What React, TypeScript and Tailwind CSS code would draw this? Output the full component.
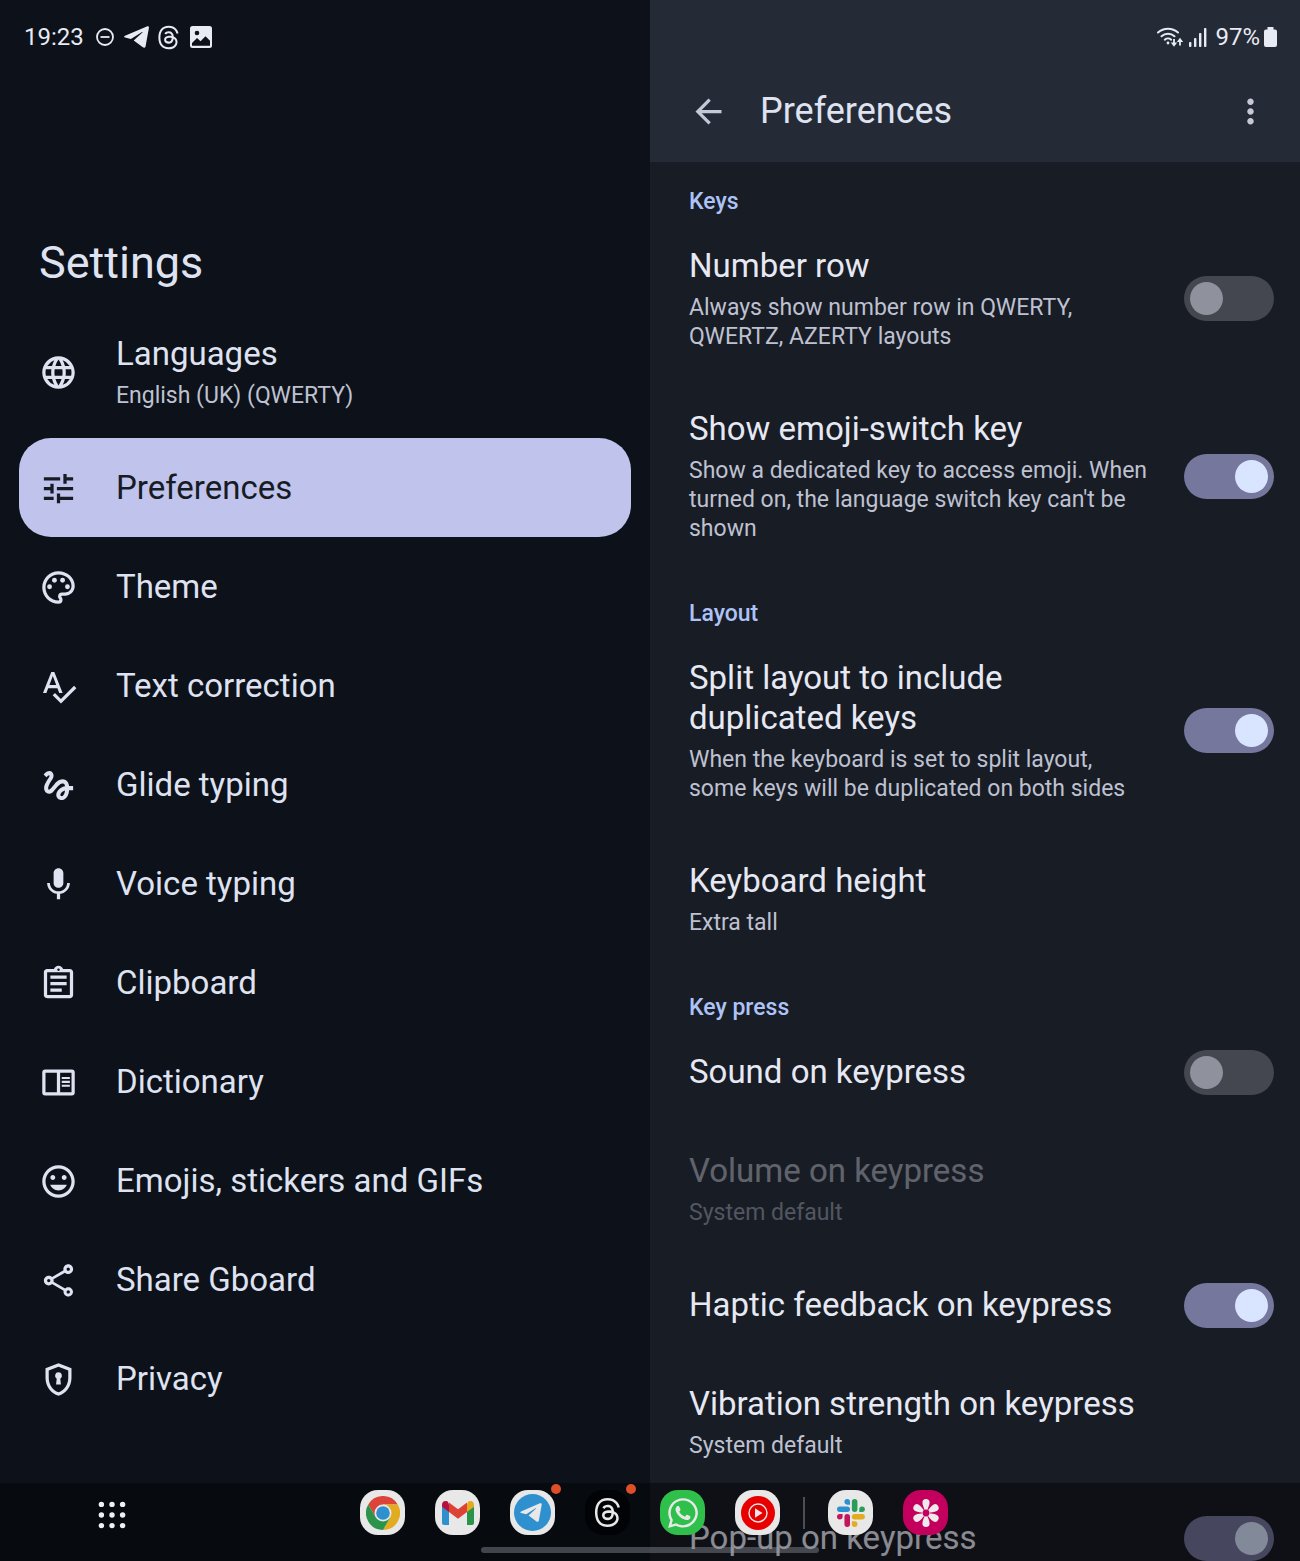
import { useState } from 'react';
import type { ReactNode } from 'react';
import type { IconType } from 'react-icons';
import {
  MdArrowBack,
  MdGesture,
  MdInsertEmoticon,
  MdLanguage,
  MdMic,
  MdMoreVert,
  MdOutlineAssignment,
  MdOutlineColorLens,
  MdOutlineShare,
  MdSpellcheck,
  MdTune,
} from 'react-icons/md';
import { FaWhatsapp } from 'react-icons/fa';
import { FaThreads } from 'react-icons/fa6';

interface IconProps {
  className?: string;
}

function PrivacyIcon({ className }: IconProps) {
  return (
    <svg viewBox="0 0 24 24" fill="currentColor" className={className} aria-hidden="true">
      <path d="M12 2 4 5v6.09c0 5.05 3.41 9.76 8 10.91 4.59-1.15 8-5.86 8-10.91V5l-8-3zm6 9.09c0 4-2.55 7.7-6 8.83-3.45-1.13-6-4.82-6-8.83v-4.7l6-2.25 6 2.25v4.7z" />
      <path d="M12 7.6a2.1 2.1 0 0 0-1.1 3.9L10.5 15h3l-.4-3.5A2.1 2.1 0 0 0 12 7.6z" />
    </svg>
  );
}

function DictionaryIcon({ className }: IconProps) {
  return (
    <svg viewBox="0 0 24 24" fill="none" stroke="currentColor" className={className} aria-hidden="true">
      <rect x="3" y="5" width="18" height="14" rx="0.8" strokeWidth="2" />
      <path d="M12 5v14" strokeWidth="2" />
      <path d="M14 9.2h5M14 11.6h5M14 14h5" strokeWidth="1.3" />
    </svg>
  );
}

function TelegramPlane({ className }: IconProps) {
  return (
    <svg viewBox="0 0 25 22" fill="currentColor" className={className} aria-hidden="true">
      <path d="M1 9.8 22.8.4C24.3-.2 25.2.5 24.9 2.1L21.6 20.2c-.3 1.5-1.5 1.9-2.7 1.1L9.7 14.6l8.7-8.1c.4-.4-.1-.7-.7-.3L6.9 12.9 1.1 11.5C-.2 11.1-.2 10.4 1 9.8z" />
    </svg>
  );
}

interface NavItem {
  label: string;
  summary?: string;
  icon: IconType | typeof PrivacyIcon;
}

const NAV_ITEMS: NavItem[] = [
  { label: 'Languages', summary: 'English (UK) (QWERTY)', icon: MdLanguage },
  { label: 'Preferences', icon: MdTune },
  { label: 'Theme', icon: MdOutlineColorLens },
  { label: 'Text correction', icon: MdSpellcheck },
  { label: 'Glide typing', icon: MdGesture },
  { label: 'Voice typing', icon: MdMic },
  { label: 'Clipboard', icon: MdOutlineAssignment },
  { label: 'Dictionary', icon: DictionaryIcon },
  { label: 'Emojis, stickers and GIFs', icon: MdInsertEmoticon },
  { label: 'Share Gboard', icon: MdOutlineShare },
  { label: 'Privacy', icon: PrivacyIcon },
];

function NavRow({ item, selected, onSelect }: { item: NavItem; selected: boolean; onSelect: () => void }) {
  const Icon = item.icon;
  return (
    <button
      type="button"
      onClick={onSelect}
      aria-current={selected ? 'page' : undefined}
      className={`flex w-full items-center gap-[38px] rounded-[32px] px-5 pt-[30px] text-left ${
        item.summary ? 'pb-7' : 'pb-[29px]'
      } ${selected ? 'bg-[#c0c3eb] text-[#171b23]' : 'text-[#dfe2f0]'}`}
    >
      <Icon className="size-[39px] shrink-0" />
      <span className="flex min-w-0 flex-col gap-[7px]">
        <span className="text-[33px] leading-10">{item.label}</span>
        {item.summary && <span className="text-[23px] leading-[29px] text-[#bec1d1]">{item.summary}</span>}
      </span>
    </button>
  );
}

function SectionTitle({ children, first = false }: { children: ReactNode; first?: boolean }) {
  return (
    <h2 className={`px-[39px] text-[23px] leading-7 font-medium text-[#adc3f7] ${first ? 'pt-[26px]' : 'pt-[29px]'}`}>
      {children}
    </h2>
  );
}

function PrefText({ title, summary }: { title: string; summary?: string }) {
  return (
    <span className="flex min-w-0 flex-1 flex-col gap-[7px]">
      <span className="text-[33px] leading-10 text-[#e6e8f3]">{title}</span>
      {summary && (
        <span className="text-[23px] leading-[29px] whitespace-pre-line text-[#bec1d1]">{summary}</span>
      )}
    </span>
  );
}

function SwitchRow({ title, summary, defaultOn = false }: { title: string; summary?: string; defaultOn?: boolean }) {
  const [on, setOn] = useState(defaultOn);
  return (
    <label
      className={`flex cursor-pointer items-center gap-[26px] pt-[30px] pr-[26px] pl-[39px] ${
        summary ? 'pb-7' : 'pb-[29px]'
      }`}
    >
      <PrefText title={title} summary={summary} />
      <input
        type="checkbox"
        role="switch"
        checked={on}
        onChange={(e) => setOn(e.target.checked)}
        className="-my-1 h-[45px] w-[90px] shrink-0 appearance-none rounded-full bg-[#44474f] p-[6px] before:block before:size-[33px] before:rounded-full before:bg-[#8f919d] checked:bg-[#75779d] checked:before:ml-[45px] checked:before:bg-[#d9e4ff]"
      />
    </label>
  );
}

function LinkRow({ title, summary, disabled = false }: { title: string; summary: string; disabled?: boolean }) {
  return (
    <button
      type="button"
      disabled={disabled}
      className="flex w-full pt-[30px] pr-[26px] pb-7 pl-[39px] text-left disabled:opacity-35"
    >
      <PrefText title={title} summary={summary} />
    </button>
  );
}

function WifiIcon() {
  return (
    <svg viewBox="0 0 26 22" className="h-[22px] w-[26px]" fill="none" stroke="currentColor" aria-hidden="true">
      <path d="M1 6.5a15 15 0 0 1 20 0" strokeWidth="2" strokeLinecap="round" />
      <path d="M4.5 10.3a9.6 9.6 0 0 1 13 0" strokeWidth="2" strokeLinecap="round" />
      <path d="M7.8 13.7a4.8 4.8 0 0 1 6.4 0" strokeWidth="2" strokeLinecap="round" />
      <circle cx="11" cy="17" r="1.4" fill="currentColor" stroke="none" />
      <path d="M17 13v5M23 19.5v-5" strokeWidth="1.8" />
      <path d="M13.8 16.5h6.4L17 20.8zM19.8 16h6.4L23 11.7z" fill="currentColor" stroke="none" />
    </svg>
  );
}

function SignalIcon() {
  return (
    <svg viewBox="0 0 18 19" className="h-[19px] w-[18px]" fill="currentColor" aria-hidden="true">
      <rect x="0" y="14" width="2.4" height="5" rx="0.8" />
      <rect x="5" y="10" width="2.4" height="9" rx="0.8" />
      <rect x="10" y="5" width="2.4" height="14" rx="0.8" />
      <rect x="15" y="0" width="2.4" height="19" rx="0.8" />
    </svg>
  );
}

function ChromeLogo() {
  return (
    <svg viewBox="0 0 48 48" className="size-[34px]" aria-hidden="true">
      <path d="M24 12h20.8A24 24 0 0 0 3.2 12l10.4 18z" fill="#db4437" />
      <path d="M34.4 30 24 48A24 24 0 0 0 44.8 12H24z" fill="#e3ab1f" />
      <path d="M13.6 30 3.2 12A24 24 0 0 0 24 48l10.4-18z" fill="#2a944a" />
      <circle cx="24" cy="24" r="12" fill="#e8e8e8" />
      <circle cx="24" cy="24" r="9.6" fill="#2f90d0" />
    </svg>
  );
}

function GmailLogo() {
  return (
    <svg viewBox="0 0 32 24" className="h-6 w-8" aria-hidden="true">
      <path d="M0 5v17a2 2 0 0 0 2 2h5V10z" fill="#2f90d0" />
      <path d="M25 10v14h5a2 2 0 0 0 2-2V5z" fill="#2a944a" />
      <path d="M25 3.5V11l7-5.2V3.6C32 .5 28.5-1.1 26 .8z" fill="#e3ab1f" />
      <path d="M7 3.5V11L0 5.8V3.6C0 .5 3.5-1.1 6 .8z" fill="#b5103f" />
      <path d="M7 11V1.5l9 6.7 9-6.7V11l-9 6.8z" fill="#dc4335" />
    </svg>
  );
}

function YouTubeMusicLogo() {
  return (
    <svg viewBox="0 0 34 34" className="size-[34px]" aria-hidden="true">
      <circle cx="17" cy="17" r="17" fill="#e80000" />
      <circle cx="17" cy="17" r="9" fill="none" stroke="#e8e8e8" strokeWidth="1.4" />
      <path d="M14 12.3v9.4l7.5-4.7z" fill="#e8e8e8" />
    </svg>
  );
}

function SlackLogo() {
  return (
    <svg viewBox="0 0 54 54" className="size-7" aria-hidden="true">
      <path
        d="M19.7.1a5.38 5.38 0 0 0-5.37 5.39 5.38 5.38 0 0 0 5.37 5.38h5.38V5.49A5.38 5.38 0 0 0 19.7.1m0 14.37H5.38A5.38 5.38 0 0 0 0 19.85a5.38 5.38 0 0 0 5.38 5.39H19.7a5.38 5.38 0 0 0 5.38-5.39 5.38 5.38 0 0 0-5.38-5.38"
        fill="#2f90d0"
      />
      <path
        d="M53.76 19.85a5.38 5.38 0 0 0-5.38-5.38A5.38 5.38 0 0 0 43 19.85v5.39h5.38a5.38 5.38 0 0 0 5.38-5.39m-14.34 0V5.49A5.38 5.38 0 0 0 34.05.1a5.38 5.38 0 0 0-5.38 5.39v14.36a5.38 5.38 0 0 0 5.38 5.39 5.38 5.38 0 0 0 5.37-5.39"
        fill="#2a9d58"
      />
      <path
        d="M34.05 53.9a5.38 5.38 0 0 0 5.37-5.38 5.38 5.38 0 0 0-5.37-5.38h-5.38v5.38a5.38 5.38 0 0 0 5.38 5.38m0-14.36h14.33a5.38 5.38 0 0 0 5.38-5.39 5.38 5.38 0 0 0-5.38-5.38H34.05a5.38 5.38 0 0 0-5.38 5.38 5.38 5.38 0 0 0 5.38 5.39"
        fill="#e3ab1f"
      />
      <path
        d="M0 34.15a5.38 5.38 0 0 0 5.38 5.39 5.38 5.38 0 0 0 5.37-5.39v-5.38H5.38A5.38 5.38 0 0 0 0 34.15m14.33 0v14.37a5.38 5.38 0 0 0 5.37 5.38 5.38 5.38 0 0 0 5.38-5.38V34.15a5.38 5.38 0 0 0-5.38-5.38 5.38 5.38 0 0 0-5.37 5.38"
        fill="#c2185b"
      />
    </svg>
  );
}

function GalleryLogo() {
  return (
    <svg viewBox="-16 -16 32 32" className="size-8" aria-hidden="true">
      {[0, 60, 120, 180, 240, 300].map((angle) => (
        <path
          key={angle}
          d="M-1.3-2C-1.6-5-3.6-7.2-3.6-10.4a3.6 3.6 0 0 1 7.2 0C3.6-7.2 1.6-5 1.3-2z"
          transform={`rotate(${angle})`}
          fill="#f0e9ec"
        />
      ))}
      <circle r="3.4" fill="#c4005e" />
    </svg>
  );
}

interface AppIconProps {
  name: string;
  className: string;
  badge?: boolean;
  children: ReactNode;
}

function AppIcon({ name, className, badge = false, children }: AppIconProps) {
  return (
    <button
      type="button"
      aria-label={name}
      className={`relative flex size-[45px] items-center justify-center rounded-[18px] ${className}`}
    >
      {children}
      {badge && <span className="absolute -top-[6px] -right-[6px] size-[10px] rounded-full bg-[#dd4f27]" />}
    </button>
  );
}

function Taskbar() {
  return (
    <nav
      aria-label="Taskbar"
      className="absolute inset-x-0 bottom-0 grid h-[78px] grid-cols-[1fr_auto_1fr] items-start bg-black/40 pt-[7px] pl-2"
    >
      <button type="button" aria-label="All apps" className="ml-[90px] flex h-[50px] w-7 items-center text-[#f0f1f6]">
        <svg viewBox="0 0 28 28" className="size-7" fill="currentColor" aria-hidden="true">
          {[3.4, 14, 24.6].map((y) => [3.4, 14, 24.6].map((x) => <circle key={`${x}-${y}`} cx={x} cy={y} r="2.7" />))}
        </svg>
      </button>

      <div className="flex">
        <div className="flex gap-[30px]">
          <AppIcon name="Chrome" className="bg-[#e8e8e8]">
            <ChromeLogo />
          </AppIcon>
          <AppIcon name="Gmail" className="bg-[#e8e8e8]">
            <GmailLogo />
          </AppIcon>
          <AppIcon name="Telegram" className="bg-[#e8e8e8]" badge>
            <span className="flex size-[37px] items-center justify-center rounded-full bg-[#2f90d0] pr-[3px] text-[#e8e8e8]">
              <TelegramPlane className="h-[19px] w-[22px]" />
            </span>
          </AppIcon>
          <AppIcon name="Threads" className="bg-[#020306] text-[#e8e8e8]" badge>
            <FaThreads className="size-[31px]" />
          </AppIcon>
          <AppIcon name="WhatsApp" className="bg-[#2fc04c] text-[#e8e8e8]">
            <FaWhatsapp className="size-[34px]" />
          </AppIcon>
          <AppIcon name="YouTube Music" className="bg-[#e8e8e8]">
            <YouTubeMusicLogo />
          </AppIcon>
        </div>
        <span className="mx-[23px] mt-[7px] h-8 w-[2px] bg-[#4b4e57]" />
        <div className="flex gap-[30px]">
          <AppIcon name="Slack" className="bg-[#e8e8e8]">
            <SlackLogo />
          </AppIcon>
          <AppIcon name="Gallery" className="bg-[#c4005e]">
            <GalleryLogo />
          </AppIcon>
        </div>
      </div>

      <span className="absolute bottom-2 left-1/2 h-[6px] w-[338px] -translate-x-1/2 rounded-full bg-[#9a9da8]/40" />
    </nav>
  );
}

export default function App() {
  const [selected, setSelected] = useState('Preferences');

  return (
    <div className="relative grid h-screen grid-cols-2 overflow-hidden bg-[#0d1119] font-[Roboto,sans-serif]">
      <aside className="min-w-0 overflow-hidden">
        <div className="flex h-[60px] items-center pt-[14px] pl-6 text-[#e8eaf4]">
          <span className="text-2xl">19:23</span>
          <svg viewBox="0 0 18 18" className="ml-3 size-[18px]" fill="none" stroke="currentColor" aria-hidden="true">
            <circle cx="9" cy="9" r="8" strokeWidth="1.8" />
            <path d="M4.5 9h9" strokeWidth="1.8" />
          </svg>
          <TelegramPlane className="ml-[10px] h-[22px] w-[25px]" />
          <FaThreads className="ml-[7px] size-[25px]" />
          <svg viewBox="0 0 22 22" className="ml-[9px] size-[22px]" aria-hidden="true">
            <rect width="22" height="22" rx="2.5" fill="currentColor" />
            <circle cx="7" cy="7" r="2.3" fill="#0d1119" />
            <path d="M2 19.8V17l5-5 3.5 3.2 5-4.9 4.5 4.4v5.1z" fill="#0d1119" />
          </svg>
        </div>

        <h1 className="mb-[11px] pt-[173px] pl-[39px] text-[45px] leading-[60px] text-[#dfe2f0]">Settings</h1>

        <nav aria-label="Settings" className="px-[19px]">
          {NAV_ITEMS.map((item) => (
            <NavRow
              key={item.label}
              item={item}
              selected={item.label === selected}
              onSelect={() => setSelected(item.label)}
            />
          ))}
        </nav>
      </aside>

      <main className="min-w-0 overflow-hidden bg-[#181c24]">
        <header className="bg-[#242b36]">
          <div className="flex h-[60px] items-center justify-end pt-[14px] pr-[23px] text-[#e8eaf4]">
            <WifiIcon />
            <span className="ml-[6px]">
              <SignalIcon />
            </span>
            <span className="ml-2 text-2xl">97%</span>
            <svg viewBox="0 0 13 20" className="ml-1 h-5 w-[13px]" fill="currentColor" aria-hidden="true">
              <path d="M3.5 0h6v2.5H11a2 2 0 0 1 2 2V18a2 2 0 0 1-2 2H2a2 2 0 0 1-2-2V4.5a2 2 0 0 1 2-2h1.5z" />
            </svg>
          </div>
          <div className="flex h-[102px] items-center pr-[30px] pl-[39px]">
            <button type="button" aria-label="Navigate up" className="text-[#c6c8d8]">
              <MdArrowBack className="size-[39px]" />
            </button>
            <h1 className="ml-8 flex-1 text-4xl text-[#dfe2f0]">Preferences</h1>
            <button type="button" aria-label="More options" className="text-[#c6c8d8]">
              <MdMoreVert className="size-[39px]" />
            </button>
          </div>
        </header>

        <SectionTitle first>Keys</SectionTitle>
        <SwitchRow title="Number row" summary="Always show number row in QWERTY, QWERTZ, AZERTY layouts" />
        <SwitchRow
          title="Show emoji-switch key"
          summary="Show a dedicated key to access emoji. When turned on, the language switch key can't be shown"
          defaultOn
        />

        <SectionTitle>Layout</SectionTitle>
        <SwitchRow
          title="Split layout to include duplicated keys"
          summary={'When the keyboard is set to split layout,\nsome keys will be duplicated on both sides'}
          defaultOn
        />
        <LinkRow title="Keyboard height" summary="Extra tall" />

        <SectionTitle>Key press</SectionTitle>
        <SwitchRow title="Sound on keypress" />
        <LinkRow title="Volume on keypress" summary="System default" disabled />
        <SwitchRow title="Haptic feedback on keypress" defaultOn />
        <LinkRow title="Vibration strength on keypress" summary="System default" />
        <SwitchRow title="Pop-up on keypress" defaultOn />
      </main>

      <Taskbar />
    </div>
  );
}
